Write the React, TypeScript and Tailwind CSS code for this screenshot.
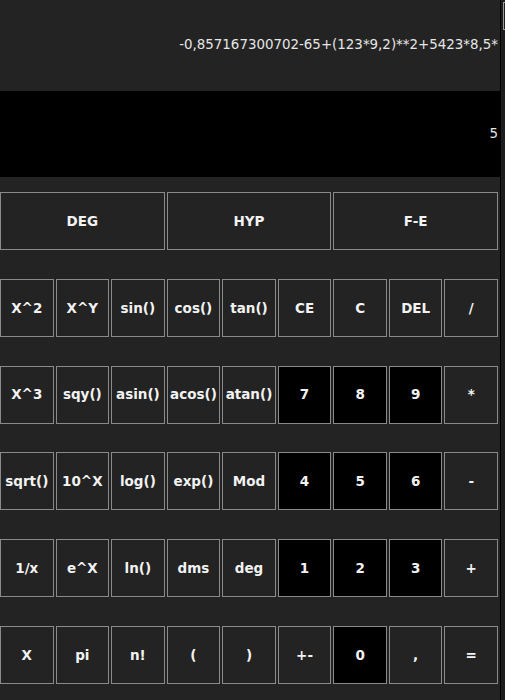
import React from "react";

type Key = { label: string; dark?: boolean };

const modeKeys = ["DEG", "HYP", "F-E"];

const rows: Key[][] = [
  [
    { label: "X^2" }, { label: "X^Y" }, { label: "sin()" }, { label: "cos()" }, { label: "tan()" },
    { label: "CE" }, { label: "C" }, { label: "DEL" }, { label: "/" },
  ],
  [
    { label: "X^3" }, { label: "sqy()" }, { label: "asin()" }, { label: "acos()" }, { label: "atan()" },
    { label: "7", dark: true }, { label: "8", dark: true }, { label: "9", dark: true }, { label: "*" },
  ],
  [
    { label: "sqrt()" }, { label: "10^X" }, { label: "log()" }, { label: "exp()" }, { label: "Mod" },
    { label: "4", dark: true }, { label: "5", dark: true }, { label: "6", dark: true }, { label: "-" },
  ],
  [
    { label: "1/x" }, { label: "e^X" }, { label: "ln()" }, { label: "dms" }, { label: "deg" },
    { label: "1", dark: true }, { label: "2", dark: true }, { label: "3", dark: true }, { label: "+" },
  ],
  [
    { label: "X" }, { label: "pi" }, { label: "n!" }, { label: "(" }, { label: ")" },
    { label: "+-" }, { label: "0", dark: true }, { label: "," }, { label: "=" },
  ],
];

function CalcKey({ label, dark }: Key) {
  return (
    <button
      className={`h-[58px] border border-[#8a8a8a] flex items-center justify-center text-[13.5px] font-bold text-[#f2f2f2] ${
        dark ? "bg-black" : "bg-[#222322]"
      }`}
    >
      {label}
    </button>
  );
}

export default function App() {
  return (
    <div className="w-[505px] h-[700px] flex bg-[#222322] overflow-hidden font-['DejaVu_Sans',Verdana,sans-serif]">
      <div className="w-[500px] flex flex-col">
        {/* Expression */}
        <div className="h-[91px] flex items-center justify-end pr-[2px] text-[13.4px] text-[#e6e6e6] whitespace-nowrap">
          -0,857167300702-65+(123*9,2)**2+5423*8,5*
        </div>

        {/* Result */}
        <div className="h-[86px] bg-black flex items-center justify-end pr-[2px] text-[13.4px] text-[#e6e6e6]">
          5
        </div>

        {/* Keypad */}
        <div className="w-[498px] flex flex-col gap-[28.75px] pt-[15px]">
          <div className="grid grid-cols-3 gap-[2px]">
            {modeKeys.map(k => (
              <CalcKey key={k} label={k} />
            ))}
          </div>
          {rows.map((row, i) => (
            <div key={i} className="grid grid-cols-9 gap-[2px]">
              {row.map(k => (
                <CalcKey key={k.label} label={k.label} dark={k.dark} />
              ))}
            </div>
          ))}
        </div>
      </div>

      {/* Scrollbar strip */}
      <div className="w-[5px] h-full border-l border-black bg-[#1c1d1c] flex flex-col items-end">
        <div className="w-[2px] h-[28px] mt-[2px] border-l border-t border-b border-[#9a9a9a]" />
      </div>
    </div>
  );
}
